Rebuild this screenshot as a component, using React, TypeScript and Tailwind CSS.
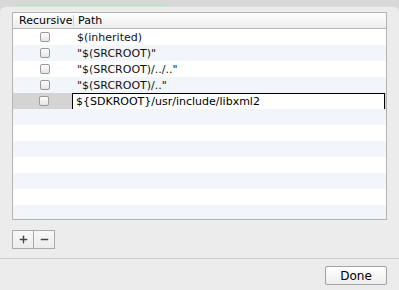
import { Plus, Minus } from 'lucide-react';

const paths = [
  '$(inherited)',
  '"$(SRCROOT)"',
  '"$(SRCROOT)/../.."',
  '"$(SRCROOT)/.."',
];

function Checkbox() {
  return (
    <div className="w-[10px] h-[10px] rounded-[2px] border border-[#9a9a9a] bg-gradient-to-b from-white to-[#e4e4e4]" />
  );
}

export default function App() {
  const emptyRows = Array.from({ length: 7 });

  return (
    <div
      className="w-[399px] h-[290px] bg-[#d8d8d8] flex flex-col overflow-hidden text-[11px] text-black"
      style={{ fontFamily: '"DejaVu Sans", "Liberation Sans", sans-serif' }}
    >
      <div className="h-[6px] flex">
        <div className="ml-[14px] w-[153px] h-[6px] border-b-2 border-[#bfe3c8] rounded-b-[4px]" />
      </div>
      <div className="flex-1 bg-[#ececec] rounded-t-[6px] border-t border-[#dcdcdc] flex flex-col">
        <div className="mx-[12px] mt-[5px] border border-[#b4b4b4] bg-white flex flex-col">
          {/* header */}
          <div className="h-[16px] flex items-center bg-gradient-to-b from-white to-[#ececec] border-b border-[#b8b8b8]">
            <div className="w-[61px] pl-[6px] border-r border-[#d0d0d0] h-[11px] flex items-center leading-none">Recursive</div>
            <div className="pl-[4px] leading-none">Path</div>
          </div>
          {/* data rows */}
          {paths.map((p, i) => (
            <div key={p} className={`h-[16px] flex items-center ${i % 2 === 1 ? 'bg-[#f2f5fa]' : 'bg-white'}`}>
              <div className="w-[62px] flex justify-center pl-[2px]">
                <Checkbox />
              </div>
              <div className="pl-[2px] leading-none text-[#111]">{p}</div>
            </div>
          ))}
          {/* selected row with edit field */}
          <div className="h-[16px] flex items-center bg-[#d4d4d4]">
            <div className="w-[59px] flex justify-center pl-[2px]">
              <Checkbox />
            </div>
            <div className="flex-1 mr-[1px] h-[17px] bg-white border border-black flex items-center pl-[3px] leading-none">
              {'${SDKROOT}/usr/include/libxml2'}
            </div>
          </div>
          {emptyRows.map((_, i) => (
            <div key={i} className={`${i === 6 ? 'h-[14px]' : 'h-[16px]'} ${i % 2 === 0 ? 'bg-[#f2f5fa]' : 'bg-white'}`} />
          ))}
        </div>
        {/* add / remove */}
        <div className="mx-[12px] mt-[10px] flex">
          <div className="w-[22px] h-[19px] border border-[#ababab] bg-gradient-to-b from-[#f8f8f8] to-[#ececec] flex items-center justify-center">
            <Plus size={11} strokeWidth={3} className="text-[#444]" />
          </div>
          <div className="w-[21px] h-[19px] border border-l-0 border-[#ababab] bg-gradient-to-b from-[#f8f8f8] to-[#ececec] flex items-center justify-center">
            <Minus size={11} strokeWidth={3} className="text-[#444]" />
          </div>
        </div>
        <div className="mt-[9px] border-t border-[#cdcdcd]" />
        <div className="flex justify-end mr-[12px] mt-[7px]">
          <div className="w-[62px] h-[19px] border border-[#a3a3a3] rounded-[2px] bg-gradient-to-b from-white to-[#eeeeee] flex items-center justify-center text-[12px] leading-none">
            Done
          </div>
        </div>
      </div>
    </div>
  );
}
